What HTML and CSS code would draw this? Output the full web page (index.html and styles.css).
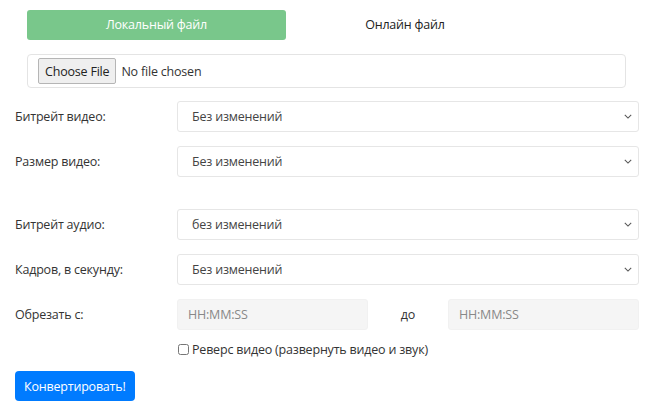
FILE: index.html
```html
<!DOCTYPE html>
<html lang="ru">
<head>
    <meta charset="UTF-8">
    <meta name="viewport" content="width=device-width, initial-scale=1.0">
    <title>Конвертер видео</title>
    <link rel="stylesheet" href="styles.css">
</head>
<body>
    <div class="tabs">
        <div class="tab active">Локальный файл</div>
        <div class="tab">Онлайн файл</div>
    </div>

    <div class="file-box">
        <input type="file" class="file-input">
    </div>

    <form class="options">
        <label class="opt-label">Битрейт видео:</label>
        <div class="select-wrap">
            <select><option>Без изменений</option></select>
            <svg class="chevron" viewBox="0 0 10 6"><path d="M1 1l4 4 4-4" fill="none" stroke="#555" stroke-width="1.3"/></svg>
        </div>

        <label class="opt-label">Размер видео:</label>
        <div class="select-wrap">
            <select><option>Без изменений</option></select>
            <svg class="chevron" viewBox="0 0 10 6"><path d="M1 1l4 4 4-4" fill="none" stroke="#555" stroke-width="1.3"/></svg>
        </div>

        <div class="spacer"></div>

        <label class="opt-label">Битрейт аудио:</label>
        <div class="select-wrap">
            <select><option>без изменений</option></select>
            <svg class="chevron" viewBox="0 0 10 6"><path d="M1 1l4 4 4-4" fill="none" stroke="#555" stroke-width="1.3"/></svg>
        </div>

        <label class="opt-label">Кадров, в секунду:</label>
        <div class="select-wrap">
            <select><option>Без изменений</option></select>
            <svg class="chevron" viewBox="0 0 10 6"><path d="M1 1l4 4 4-4" fill="none" stroke="#555" stroke-width="1.3"/></svg>
        </div>

        <label class="opt-label">Обрезать с:</label>
        <div class="trim">
            <input type="text" class="time" placeholder="HH:MM:SS">
            <span class="trim-to">до</span>
            <input type="text" class="time" placeholder="HH:MM:SS">
        </div>

        <div></div>
        <label class="reverse"><input type="checkbox"> Реверс видео (развернуть видео и звук)</label>
    </form>

    <button class="convert">Конвертировать!</button>
</body>
</html>
```

FILE: styles.css
```css
body {
    font-family: "Open Sans", "Noto Sans", sans-serif;
    font-size: 12.5px;
    letter-spacing: -0.2px;
    color: #333;
    margin: 0;
    padding: 10px 0 0 0;
    background-color: #fff;
}

.tabs {
    display: flex;
    margin-left: 27px;
}

.tab {
    height: 30px;
    line-height: 30px;
    text-align: center;
    color: #222;
}

.tab:first-child {
    width: 259px;
}

.tab:last-child {
    width: 238px;
}

.tab.active {
    background-color: #79c78b;
    color: #fff;
    border-radius: 3px;
}

.file-box {
    margin: 14px 38px 0 27px;
    height: 32px;
    border: 1px solid #e4e4e4;
    border-radius: 4px;
    display: flex;
    align-items: center;
    padding-left: 10px;
}

.file-input {
    font-family: "Open Sans", sans-serif;
    font-size: 12.5px;
    letter-spacing: -0.2px;
    color: #333;
}

.file-input::file-selector-button {
    font-family: "Open Sans", sans-serif;
    font-size: 12.5px;
    letter-spacing: -0.2px;
    height: 26px;
    padding: 0 6px;
    margin-right: 5px;
    border: 1px solid #b5b5b5;
    border-radius: 2px;
    background-color: #efefef;
    color: #222;
}

.options {
    display: grid;
    grid-template-columns: 162px 1fr;
    row-gap: 14px;
    align-items: center;
    padding: 0 25px 0 15px;
    margin-top: 13px;
}

.opt-label {
    color: #333;
}

.spacer {
    grid-column: 1 / 3;
    height: 4px;
}

.select-wrap {
    position: relative;
}

.select-wrap select {
    width: 100%;
    height: 31px;
    appearance: none;
    -webkit-appearance: none;
    border: 1px solid #e6e6e6;
    border-radius: 3px;
    background-color: #fff;
    padding: 0 30px 0 14px;
    font-family: "Open Sans", sans-serif;
    font-size: 12.5px;
    letter-spacing: -0.2px;
    color: #444;
}

.chevron {
    position: absolute;
    right: 7px;
    top: 13px;
    width: 8px;
    height: 5px;
}

.trim {
    display: flex;
    align-items: center;
}

.time {
    flex: 1;
    height: 31px;
    box-sizing: border-box;
    border: 1px solid #f1f1f1;
    border-radius: 3px;
    background-color: #f5f5f5;
    padding: 0 10px;
    font-family: "Open Sans", sans-serif;
    font-size: 12.5px;
    letter-spacing: -0.2px;
}

.time::placeholder {
    color: #888;
}

.trim-to {
    width: 80px;
    text-align: center;
    color: #333;
}

.reverse {
    display: flex;
    align-items: center;
    gap: 3px;
    color: #333;
    margin-top: -3px;
}

.reverse input {
    margin: 0 0 0 1px;
    width: 11px;
    height: 11px;
}

.convert {
    margin: 13px 0 0 15px;
    height: 30px;
    padding: 0 9px;
    background-color: #007bff;
    color: #fff;
    border: none;
    border-radius: 4px;
    font-family: "Open Sans", sans-serif;
    font-size: 12.5px;
    letter-spacing: -0.2px;
}
```
